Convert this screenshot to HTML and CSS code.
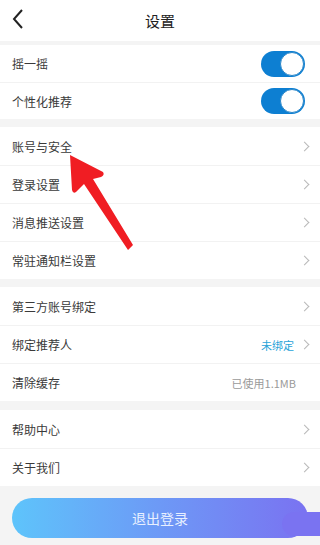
FILE: index.html
```html
<!DOCTYPE html>
<html lang="zh">
<head>
<meta charset="utf-8">
<link rel="stylesheet" href="styles.css">
</head>
<body>
<div class="page">
  <header class="header">
    <svg class="back" width="12" height="20" viewBox="0 0 12 20"><path d="M10 1 L2 10 L10 19" fill="none" stroke="#222" stroke-width="2"/></svg>
    <div class="title">设置</div>
  </header>
  <div class="group g1">
    <div class="row r37"><span>摇一摇</span><span class="toggle"><span class="knob"></span></span></div>
    <div class="row r37"><span>个性化推荐</span><span class="toggle"><span class="knob"></span></span></div>
  </div>
  <div class="group">
    <div class="row"><span>账号与安全</span><span class="chev"></span></div>
    <div class="row"><span>登录设置</span><span class="chev"></span></div>
    <div class="row"><span>消息推送设置</span><span class="chev"></span></div>
    <div class="row"><span>常驻通知栏设置</span><span class="chev"></span></div>
  </div>
  <div class="group">
    <div class="row"><span>第三方账号绑定</span><span class="chev"></span></div>
    <div class="row"><span>绑定推荐人</span><span class="right"><span class="link">未绑定</span><span class="chev"></span></span></div>
    <div class="row"><span>清除缓存</span><span class="right"><span class="meta">已使用1.1MB</span></span></div>
  </div>
  <div class="group g4">
    <div class="row"><span>帮助中心</span><span class="chev"></span></div>
    <div class="row"><span>关于我们</span><span class="chev"></span></div>
  </div>
  <div class="footer">
    <div class="logout">退出登录</div>
  </div>
  <svg class="arrow" width="320" height="545" viewBox="0 0 320 545">
    <path d="M70 155 L103 172 Q105 175 101 177 L93 179 L133 245 L128 250 L84 184 L76 192 Q73 194 72 190 Z" fill="#f01d23"/>
  </svg>
</div>
</body>
</html>
```
FILE: styles.css
```css
* { box-sizing: border-box; }
html, body { margin: 0; padding: 0; }
body {
  font-family: "Noto Sans CJK SC", "Noto Sans", sans-serif;
  color: #333;
  background: #f4f4f4;
}
.page {
  position: relative;
  width: 320px;
  height: 545px;
  overflow: hidden;
  background: #f4f4f4;
}
.header {
  position: relative;
  height: 41px;
  background: #fff;
  display: flex;
  align-items: center;
  justify-content: center;
}
.back { position: absolute; left: 12px; top: 9px; }
.title { font-size: 15px; color: #222; }
.group {
  background: #fff;
  margin-top: 8px;
}
.g1 { margin-top: 4px; }
.g4 { margin-top: 9px; }
.row {
  height: 38px;
  display: flex;
  align-items: center;
  justify-content: space-between;
  padding: 0 9px 0 12px;
  font-size: 12px;
  color: #3a3a3a;
  border-top: 1px solid #f2f2f2;
}
.row:first-child { border-top: none; }
.r37 { height: 37px; padding-right: 15px; }
.toggle {
  position: relative;
  width: 44px;
  height: 26px;
  border-radius: 13px;
  background: #0d7fd2;
}
.knob {
  position: absolute;
  right: 1px;
  top: 1px;
  width: 24px;
  height: 24px;
  border-radius: 50%;
  background: #fff;
  border: 1.5px solid #2a86c9;
}
.chev {
  width: 7px;
  height: 7px;
  border-right: 1.2px solid #b8b8b8;
  border-top: 1.2px solid #b8b8b8;
  transform: rotate(45deg);
  margin-right: 3px;
}
.right { display: flex; align-items: center; gap: 7px; }
.link { color: #2aa3d8; font-size: 11px; }
.meta { color: #9a9a9a; font-size: 11px; margin-right: 15px; }
.footer {
  position: relative;
  padding: 12px 12px 0;
}
.logout {
  position: relative;
  height: 40px;
  border-radius: 20px;
  background: linear-gradient(90deg, #5ec4fb 0%, #6d99f6 50%, #7a72f1 100%);
  color: #e8f0ff;
  font-size: 14px;
  display: flex;
  align-items: center;
  justify-content: center;
}
.logout::after {
  content: "";
  position: absolute;
  right: -14px;
  top: 14px;
  width: 40px;
  height: 24px;
  border-radius: 12px 0 0 12px;
  background: #7a73f1;
}
.arrow { position: absolute; left: 0; top: 0; pointer-events: none; }
```
